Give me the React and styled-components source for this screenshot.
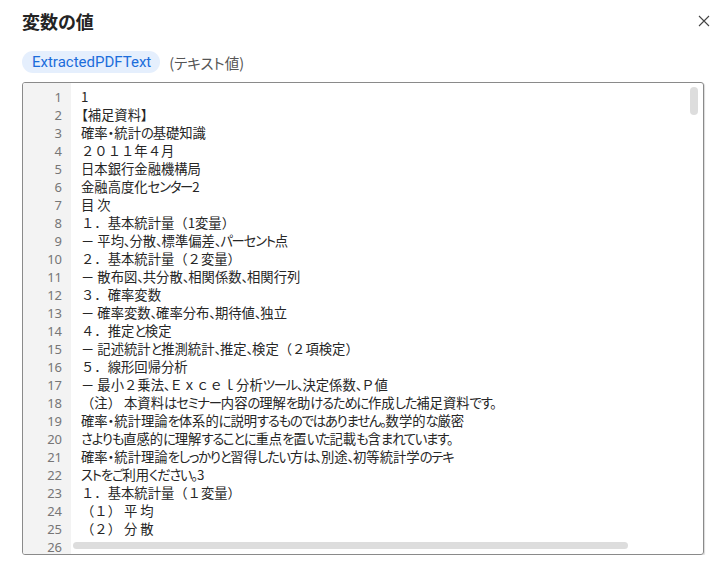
import React from "react";
import styled, { createGlobalStyle } from "styled-components";

const GlobalStyle = createGlobalStyle`
  body {
    margin: 0;
    background: #ffffff;
    font-family: "Noto Sans CJK JP", "Noto Sans", sans-serif;
  }
`;

const Dialog = styled.div`
  display: flex;
  flex-direction: column;
  padding: 8px 6px 0 22px;
`;

const Header = styled.div`
  display: flex;
  justify-content: space-between;
  align-items: center;
  height: 26px;
`;

const Title = styled.h2`
  margin: 0;
  font-size: 18px;
  font-weight: 700;
  line-height: 26px;
  color: #242424;
  font-feature-settings: "palt";
`;

const CloseButton = styled.button`
  display: flex;
  align-items: center;
  justify-content: center;
  width: 12px;
  height: 12px;
  margin-right: -6px;
  padding: 0;
  border: none;
  background: none;
  cursor: pointer;
`;

const MetaRow = styled.div`
  display: flex;
  align-items: center;
  gap: 9px;
  margin-top: 17px;
  height: 22px;
`;

const Badge = styled.span`
  display: inline-flex;
  align-items: center;
  height: 22px;
  padding: 0 9px 0 10px;
  border-radius: 11px;
  background: #e5effd;
  color: #1b6ddb;
  font-family: Roboto, "Noto Sans", sans-serif;
  font-size: 15px;
`;

const TypeLabel = styled.span`
  color: #555555;
  font-size: 14.5px;
  font-feature-settings: "palt";
`;

const Editor = styled.div`
  position: relative;
  display: flex;
  margin-top: 9px;
  height: 471px;
  border: 1px solid #8a8a8a;
  border-radius: 3px;
  box-shadow: 1px 1px 1px rgba(0, 0, 0, 0.15);
  overflow: hidden;
`;

const Gutter = styled.div`
  flex: 0 0 48px;
  box-sizing: border-box;
  padding: 5px 9px 0 0;
  background: #f3f3f3;
  text-align: right;
  color: #767676;
  font-family: "Noto Sans", sans-serif;
  font-size: 13px;
  line-height: 18px;
`;

const Content = styled.div`
  flex: 1;
  padding: 5px 0 0 10px;
  color: #262626;
  font-size: 13.33px;
  line-height: 18px;
  white-space: pre;
  font-feature-settings: "palt";
`;

const Line = styled.div`
  height: 18px;
`;

// full-width digits, letters and brackets keep their full em width
const Wide = styled.span`
  font-feature-settings: normal;
`;

// kana run narrower than in Noto, as in a UI gothic face
const Kana = styled.span`
  letter-spacing: -1.2px;
`;

const Thumb = styled.div`
  position: absolute;
  background: #dddddd;
  border-radius: 4px;
  ${(p) =>
    p.$vertical
      ? `top: 4px; right: 5px; width: 8px; height: 28px;`
      : `bottom: 5px; left: 50px; width: 555px; height: 7px;`}
`;

const lines = [
  "1",
  "【補足資料】",
  "確率・統計の基礎知識",
  "２０１１年４月",
  "日本銀行金融機構局",
  "金融高度化センター2",
  "目 次",
  "１．基本統計量（1変量）",
  "－ 平均、分散、標準偏差、パーセント点",
  "２．基本統計量（２変量）",
  "－ 散布図、共分散、相関係数、相関行列",
  "３．確率変数",
  "－ 確率変数、確率分布、期待値、独立",
  "４．推定と検定",
  "－ 記述統計と推測統計、推定、検定（２項検定）",
  "５．線形回帰分析",
  "－ 最小２乗法、Ｅｘｃｅｌ分析ツール、決定係数、Ｐ値",
  "（注） 本資料はセミナー内容の理解を助けるために作成した補足資料です。",
  "確率・統計理論を体系的に説明するものではありません。数学的な厳密",
  "さよりも直感的に理解することに重点を置いた記載も含まれています。",
  "確率・統計理論をしっかりと習得したい方は、別途、初等統計学のテキ",
  "ストをご利用ください。3",
  "１．基本統計量（１変量）",
  "（１） 平 均",
  "（２） 分 散",
  "",
];

const splitPattern = /([０-９Ａ-Ｚａ-ｚ（）．－]+|[ぁ-んァ-ヶー、。]+)/;

function renderLine(text) {
  return text.split(splitPattern).map((part, i) => {
    if (i % 2 === 0) return part;
    if (/^[ぁ-んァ-ヶー、。]/.test(part)) return <Kana key={i}>{part}</Kana>;
    return <Wide key={i}>{part}</Wide>;
  });
}

export default function App() {
  return (
    <>
      <GlobalStyle />
      <Dialog>
        <Header>
          <Title>変数の値</Title>
          <CloseButton aria-label="閉じる">
            <svg width="12" height="12" viewBox="0 0 12 12">
              <path d="M1 1L11 11M11 1L1 11" stroke="#444" strokeWidth="1.1" />
            </svg>
          </CloseButton>
        </Header>
        <MetaRow>
          <Badge>ExtractedPDFText</Badge>
          <TypeLabel>(テキスト値)</TypeLabel>
        </MetaRow>
        <Editor>
          <Gutter>
            {lines.map((_, i) => (
              <Line key={i}>{i + 1}</Line>
            ))}
          </Gutter>
          <Content>
            {lines.map((t, i) => (
              <Line key={i}>{renderLine(t)}</Line>
            ))}
          </Content>
          <Thumb $vertical />
          <Thumb />
        </Editor>
      </Dialog>
    </>
  );
}
